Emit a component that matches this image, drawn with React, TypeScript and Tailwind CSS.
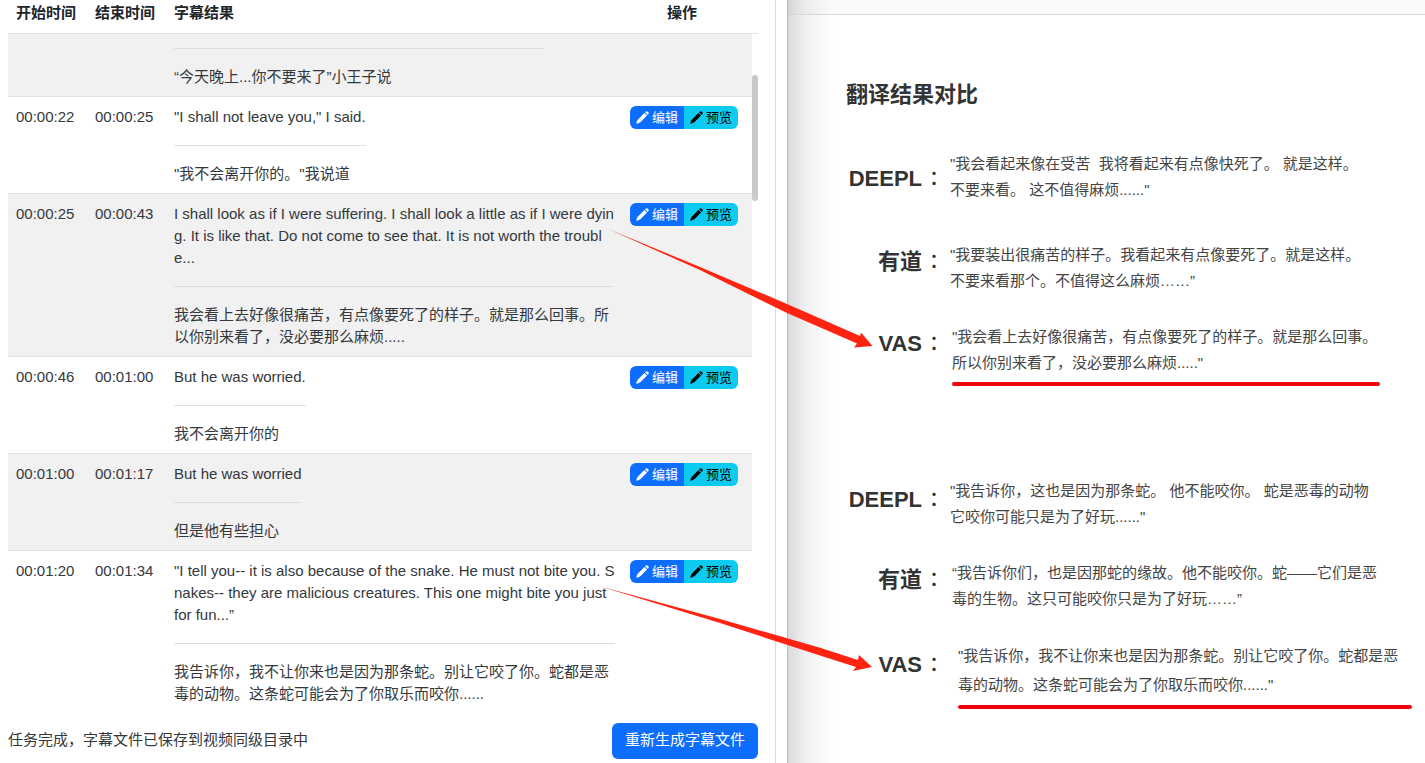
type Cue = {
  start?: string;
  end?: string;
  source: string[];
  target: string[];
};

const cues: Cue[] = [
  { source: [], target: ["“今天晚上...你不要来了”小王子说"] },
  {
    start: "00:00:22",
    end: "00:00:25",
    source: ['"I shall not leave you," I said.'],
    target: ['"我不会离开你的。"我说道'],
  },
  {
    start: "00:00:25",
    end: "00:00:43",
    source: [
      "I shall look as if I were suffering. I shall look a little as if I were dyin",
      "g. It is like that. Do not come to see that. It is not worth the troubl",
      "e...",
    ],
    target: ["我会看上去好像很痛苦，有点像要死了的样子。就是那么回事。所", "以你别来看了，没必要那么麻烦....."],
  },
  { start: "00:00:46", end: "00:01:00", source: ["But he was worried."], target: ["我不会离开你的"] },
  { start: "00:01:00", end: "00:01:17", source: ["But he was worried"], target: ["但是他有些担心"] },
  {
    start: "00:01:20",
    end: "00:01:34",
    source: [
      '"I tell you-- it is also because of the snake. He must not bite you. S',
      "nakes-- they are malicious creatures. This one might bite you just",
      "for fun...”",
    ],
    target: ["我告诉你，我不让你来也是因为那条蛇。别让它咬了你。蛇都是恶", "毒的动物。这条蛇可能会为了你取乐而咬你......"],
  },
];

type Entry = {
  name: string;
  lines: string[];
  row: string;
  label: string;
  body: string;
  underline?: string;
};

const entries: Entry[] = [
  {
    name: "DEEPL",
    lines: ['"我会看起来像在受苦  我将看起来有点像快死了。 就是这样。', '不要来看。 这不值得麻烦......"'],
    row: "",
    label: "pt-3",
    body: "pl-[6px] leading-[26px]",
  },
  {
    name: "有道",
    lines: ['"我要装出很痛苦的样子。我看起来有点像要死了。就是这样。', "不要来看那个。不值得这么麻烦……”"],
    row: "mt-[39px]",
    label: "pt-1",
    body: "pl-[6px] leading-[26px]",
  },
  {
    name: "VAS",
    lines: ['"我会看上去好像很痛苦，有点像要死了的样子。就是那么回事。', '所以你别来看了，没必要那么麻烦....."'],
    row: "mt-[30px]",
    label: "pt-1",
    body: "pl-2 leading-[26px]",
    underline: "w-[428px]",
  },
  {
    name: "DEEPL",
    lines: ['"我告诉你，这也是因为那条蛇。 他不能咬你。 蛇是恶毒的动物', '它咬你可能只是为了好玩......"'],
    row: "mt-[92px]",
    label: "pt-[6px]",
    body: "pl-[6px] leading-[26px]",
  },
  {
    name: "有道",
    lines: ["“我告诉你们，也是因那蛇的缘故。他不能咬你。蛇——它们是恶", "毒的生物。这只可能咬你只是为了好玩……”"],
    row: "mt-[30px]",
    label: "pt-1",
    body: "pl-2 leading-[26px]",
  },
  {
    name: "VAS",
    lines: ['"我告诉你，我不让你来也是因为那条蛇。别让它咬了你。蛇都是恶', '毒的动物。这条蛇可能会为了你取乐而咬你......"'],
    row: "mt-[29px]",
    label: "pt-2",
    body: "pl-[14px] leading-[29px]",
    underline: "w-[454px]",
  },
];

function Lines({ lines }: { lines: string[] }) {
  return (
    <>
      {lines.map((line) => (
        <p key={line} className="whitespace-pre">
          {line}
        </p>
      ))}
    </>
  );
}

function PencilIcon() {
  return (
    <svg viewBox="0 0 13 13" className="size-[13px]" fill="currentColor" aria-hidden="true">
      <path d="M8.400 2 L11 4.600 L4.600 11 Q3.900 11.700 2.900 12 L0.700 12.700 Q0.200 12.800 0.300 12.300 L1 10.100 Q1.300 9.100 2 8.400 Z" />
      <path d="M9.100 1.300 L9.900 0.600 Q10.800 -0.100 11.700 0.700 L12.300 1.300 Q13.100 2.200 12.400 3.100 L11.700 3.900 Z" />
    </svg>
  );
}

function CueRow({ cue, striped }: { cue: Cue; striped: boolean }) {
  const clipped = !cue.start;
  return (
    <tr
      className={
        striped
          ? "border-b border-[#dee2e6] bg-[#f1f1f1] align-top last:border-b-0"
          : "border-b border-[#dee2e6] bg-white align-top last:border-b-0"
      }
    >
      <td className="pl-2 pt-[9px]">{cue.start}</td>
      <td className="pl-2 pt-[9px]">{cue.end}</td>
      <td className={clipped ? "pb-2 pl-2 pt-[14px]" : "pb-2 pl-2 pt-[9px]"}>
        <div className={clipped ? "w-[370px]" : "w-fit"}>
          <Lines lines={cue.source} />
          <hr className={clipped ? "mb-[17px] border-[#dcdee0]" : "my-[17px] border-[#dcdee0]"} />
          <Lines lines={cue.target} />
        </div>
      </td>
      <td className="pr-[14px] pt-[9px]">
        {!clipped && (
          <div className="flex justify-end text-[13px] leading-[23px]">
            <button
              type="button"
              className="flex w-[54px] items-center justify-center gap-[3px] rounded-l-md bg-[#0d6efd] text-white"
            >
              <PencilIcon />
              编辑
            </button>
            <button
              type="button"
              className="flex w-[54px] items-center justify-center gap-[3px] rounded-r-md bg-[#0dcaf0] text-black"
            >
              <PencilIcon />
              预览
            </button>
          </div>
        )}
      </td>
    </tr>
  );
}

function Subtitles() {
  return (
    <section className="flex border-r border-[#b9b9b9] bg-white pr-[11px]">
      <div className="min-w-0 flex-1 border-r border-[#dcdcdc] pl-2 pr-[17px]">
        <div className="flex">
          <table className="min-w-0 flex-1 table-fixed border-collapse text-[15px] leading-[22px] text-[#34383c]">
            <colgroup>
              <col className="w-[79px]" />
              <col className="w-[79px]" />
              <col />
              <col className="w-[130px]" />
            </colgroup>
            <thead>
              <tr className="h-[33px] border-b border-[#dee2e6] text-left align-top text-[#212529]">
                <th className="pl-2 pt-[2px]">开始时间</th>
                <th className="pl-2 pt-[2px]">结束时间</th>
                <th className="pl-2 pt-[2px]">字幕结果</th>
                <th className="pr-[10px] pt-[2px] text-center">操作</th>
              </tr>
            </thead>
            <tbody>
              {cues.map((cue, i) => (
                <CueRow key={i} cue={cue} striped={i % 2 === 0} />
              ))}
            </tbody>
          </table>
          <div className="w-[6px]">
            <div className="h-[34px] border-b border-[#dee2e6]" />
            <div className="mt-[41px] h-[126px] rounded-full bg-[#c9c9c9]" />
          </div>
        </div>
        <footer className="mt-[10px] flex items-center justify-between text-[15px] text-[#34383c]">
          <p>任务完成，字幕文件已保存到视频同级目录中</p>
          <button type="button" className="h-9 rounded-md bg-[#0d6efd] px-[13px] text-white">
            重新生成字幕文件
          </button>
        </footer>
      </div>
    </section>
  );
}

function Comparison() {
  return (
    <section className="bg-[linear-gradient(to_right,#dadada,#f1f1f1_18px,#fff_46px)] text-[#333]">
      <div className="h-[15px] border-b border-[#d9d9d9] bg-black/2" />
      <div className="pl-[58px]">
        <h1 className="pt-16 text-[22px] font-bold leading-8">翻译结果对比</h1>
        <div className="mt-10">
          {entries.map((entry, i) => (
            <div key={i} className={`flex items-start ${entry.row}`}>
              <h2 className={`flex w-[98px] justify-end gap-[2px] text-[22px] font-bold leading-8 ${entry.label}`}>
                {entry.name}
                <span className="font-['Noto_Sans_CJK_JP',sans-serif] text-xl font-medium leading-[30px]">：</span>
              </h2>
              <div className={`text-[15px] text-[#444] ${entry.body}`}>
                <Lines lines={entry.lines} />
                {entry.underline && <div className={`mt-[6px] h-1 rounded-full bg-[#f5000a] ${entry.underline}`} />}
              </div>
            </div>
          ))}
        </div>
      </div>
    </section>
  );
}

export default function App() {
  return (
    <main className="relative grid min-h-screen grid-cols-[788fr_637fr] overflow-hidden font-['Liberation_Sans','Noto_Sans_CJK_SC',sans-serif]">
      <Subtitles />
      <Comparison />
      <svg
        className="pointer-events-none absolute inset-0 size-full"
        viewBox="0 0 1425 763"
        preserveAspectRatio="none"
        fill="#ff2312"
        aria-hidden="true"
      >
        <path d="M608 229 L700 267 L787 304 L860 336 L861 332.500 L872.500 346 L854 347.500 L857 343.500 L787 313 L700 270 Z" />
        <path d="M599 586 L720 619 L820 647.700 L858 660 L859 655 L872 667 L853 671 L856 667 L820 655.500 L720 623 Z" />
      </svg>
    </main>
  );
}
